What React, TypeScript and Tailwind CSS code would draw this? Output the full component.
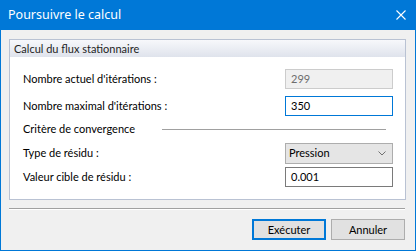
import React from "react";

const font = { fontFamily: 'Lato, "Noto Sans", sans-serif' };
const titleFont = { fontFamily: '"Noto Sans", "Open Sans", sans-serif' };

export default function App() {
  return (
    <div
      className="w-[416px] h-[251px] flex flex-col bg-[#f0f0f0] border-x border-b border-[#0078d7] text-[11px] text-black"
      style={font}
    >
      {/* Title bar */}
      <div className="h-[30px] bg-[#0078d7] flex items-center justify-between pl-[8px] pr-[9px] -mx-px">
        <span className="text-white text-[12.5px] leading-none" style={titleFont}>
          Poursuivre le calcul
        </span>
        <svg width="10" height="10" viewBox="0 0 10 10" className="mr-[1px]">
          <path d="M0.5 0.5 L9.5 9.5 M9.5 0.5 L0.5 9.5" stroke="white" strokeWidth="1.1" />
        </svg>
      </div>

      {/* Group box */}
      <div className="mt-[9px] ml-[8px] mr-[9px] border border-[#b9c2d3] bg-white flex flex-col">
        <div className="h-[17px] flex items-center pl-[4px] bg-gradient-to-b from-[#f7f8fb] to-[#dfe3ec] text-[#1e1e1e] text-[11px] leading-none">
          Calcul du flux stationnaire
        </div>
        <div className="flex flex-col pt-[12px] pb-[12px] pl-[13px] pr-[12px]">
          <div className="h-[20px] flex items-center justify-between">
            <span>Nombre actuel d'itérations :</span>
            <div className="w-[108px] h-[20px] border border-[#cccccc] bg-[#f0f0f0] text-[#6d6d6d] flex items-center pl-[5px]">
              299
            </div>
          </div>
          <div className="h-[20px] mt-[7px] flex items-center justify-between">
            <span>Nombre maximal d'itérations :</span>
            <div className="w-[108px] h-[20px] border border-[#0078d7] bg-white flex items-center pl-[5px]">
              350
            </div>
          </div>
          <div className="h-[27px] flex items-center">
            <span className="w-[139px] shrink-0">Critère de convergence</span>
            <div className="flex-1 h-px bg-[#a0a0a0] mr-[7px]" />
          </div>
          <div className="h-[21px] flex items-center justify-between">
            <span>Type de résidu :</span>
            <div className="w-[108px] h-[21px] border border-[#adadad] bg-[#e5e5e5] flex items-center justify-between pl-[3px] pr-[6px]">
              <span>Pression</span>
              <svg width="8" height="5" viewBox="0 0 8 5">
                <path d="M0.5 0.5 L4 4 L7.5 0.5" stroke="#707070" strokeWidth="1" fill="none" />
              </svg>
            </div>
          </div>
          <div className="h-[20px] mt-[3px] flex items-center justify-between">
            <span>Valeur cible de résidu :</span>
            <div className="w-[108px] h-[20px] border border-[#7a7a7a] bg-white flex items-center pl-[5px]">
              0.001
            </div>
          </div>
        </div>
      </div>

      {/* Footer separator */}
      <div className="mt-[8px] ml-[8px] mr-[10px] flex flex-col">
        <div className="h-px bg-[#a0a0a0]" />
        <div className="h-px bg-white" />
      </div>

      {/* Buttons */}
      <div className="mt-[9px] mr-[10px] flex justify-end gap-[5px]">
        <button className="w-[74px] h-[21px] border-2 border-[#0078d7] bg-[#e1e1e1] flex items-center justify-center leading-none">
          Exécuter
        </button>
        <button className="w-[74px] h-[21px] border border-[#adadad] bg-[#e1e1e1] flex items-center justify-center leading-none">
          Annuler
        </button>
      </div>
    </div>
  );
}
